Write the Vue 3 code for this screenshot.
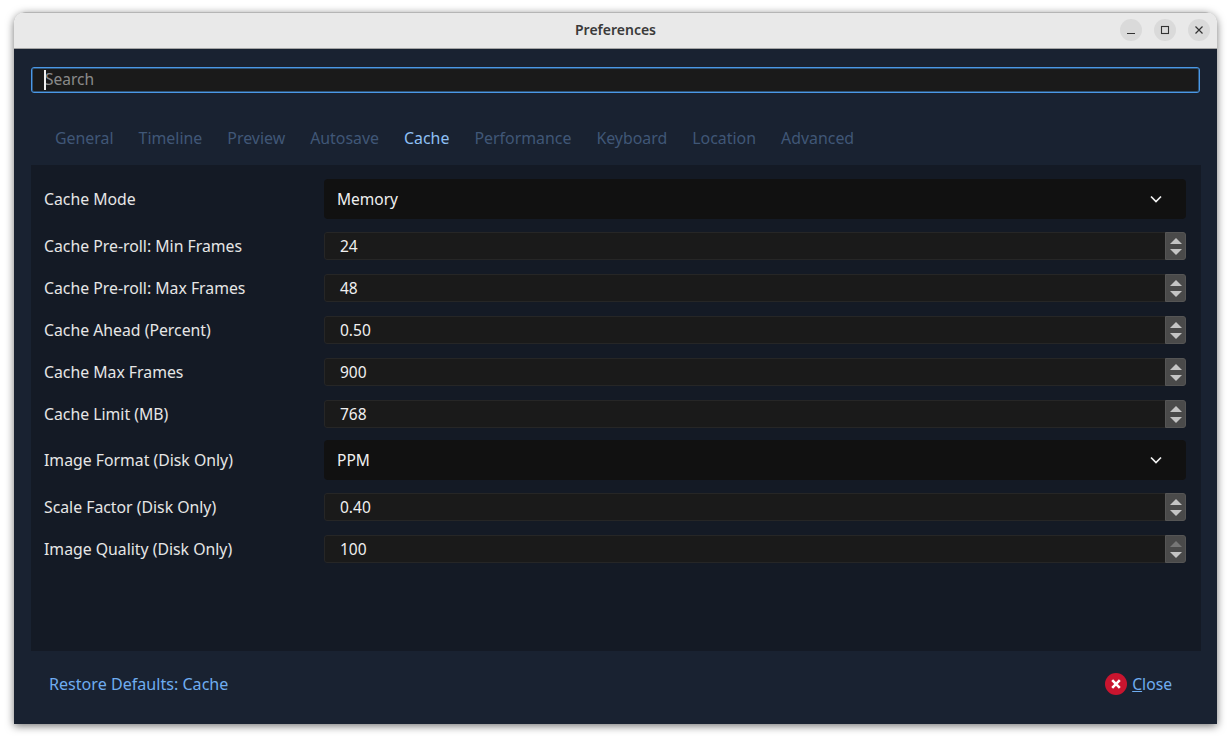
<template>
  <div class="desktop">
    <div class="window">
      <header class="titlebar">
        <span class="title">Preferences</span>
        <div class="window-buttons">
          <button class="win-btn">
            <svg width="10" height="10" viewBox="0 0 10 10"><path d="M1 8.5h8" stroke="#333" stroke-width="1.1" fill="none" /></svg>
          </button>
          <button class="win-btn">
            <svg width="10" height="10" viewBox="0 0 10 10"><rect x="1.5" y="1.5" width="7" height="7" stroke="#333" stroke-width="1.1" fill="none" /></svg>
          </button>
          <button class="win-btn">
            <svg width="10" height="10" viewBox="0 0 10 10"><path d="M1.5 1.5l7 7M8.5 1.5l-7 7" stroke="#333" stroke-width="1.2" fill="none" /></svg>
          </button>
        </div>
      </header>

      <main class="content">
        <div class="search-box">
          <span class="caret"></span>
          <span class="search-text">Search</span>
        </div>

        <nav class="tabs">
          <span
            v-for="tab in tabs"
            :key="tab"
            class="tab"
            :class="{ active: tab === 'Cache' }"
          >{{ tab }}</span>
        </nav>

        <section class="panel">
          <div
            v-for="row in rows"
            :key="row.label"
            class="row"
            :class="row.type === 'combo' ? 'row-combo' : 'row-spin'"
          >
            <label class="row-label">{{ row.label }}</label>

            <div v-if="row.type === 'combo'" class="combo">
              <span>{{ row.value }}</span>
              <svg width="14" height="10" viewBox="0 0 14 10"><path d="M2 2.5l5 5 5-5" stroke="#f2f2f2" stroke-width="1.7" fill="none" /></svg>
            </div>

            <div v-else class="spin">
              <span class="spin-value">{{ row.value }}</span>
              <div class="spin-buttons">
                <span class="arrow up" :class="{ disabled: row.value === '100' }"></span>
                <span class="arrow down"></span>
              </div>
            </div>
          </div>
        </section>

        <footer class="footer">
          <span class="restore">Restore Defaults: Cache</span>
          <span class="close">
            <svg width="22" height="22" viewBox="0 0 22 22">
              <circle cx="11" cy="11" r="11" fill="#c9152f" />
              <path d="M7.2 7.2l7.6 7.6M14.8 7.2l-7.6 7.6" stroke="#fff" stroke-width="2.6" fill="none" />
            </svg>
            <span class="close-text"><u>C</u>lose</span>
          </span>
        </footer>
      </main>
    </div>
  </div>
</template>

<script setup>
const tabs = ['General', 'Timeline', 'Preview', 'Autosave', 'Cache', 'Performance', 'Keyboard', 'Location', 'Advanced']

const rows = [
  { label: 'Cache Mode', type: 'combo', value: 'Memory' },
  { label: 'Cache Pre-roll: Min Frames', type: 'spin', value: '24' },
  { label: 'Cache Pre-roll: Max Frames', type: 'spin', value: '48' },
  { label: 'Cache Ahead (Percent)', type: 'spin', value: '0.50' },
  { label: 'Cache Max Frames', type: 'spin', value: '900' },
  { label: 'Cache Limit (MB)', type: 'spin', value: '768' },
  { label: 'Image Format (Disk Only)', type: 'combo', value: 'PPM' },
  { label: 'Scale Factor (Disk Only)', type: 'spin', value: '0.40' },
  { label: 'Image Quality (Disk Only)', type: 'spin', value: '100' }
]
</script>

<style>
html, body {
  margin: 0;
  background: #fff;
}
</style>

<style scoped>
.desktop {
  width: 1231px;
  height: 741px;
  padding: 12px 14px 17px;
  box-sizing: border-box;
  font-family: "Noto Sans", "Open Sans", sans-serif;
  overflow: hidden;
}

.window {
  height: 712px;
  display: flex;
  flex-direction: column;
  border-radius: 12px 12px 0 0;
  overflow: hidden;
  box-shadow: 0 2px 8px rgba(0, 0, 0, 0.55);
}

/* Barra de titulo */
.titlebar {
  height: 37px;
  flex: none;
  display: flex;
  align-items: center;
  justify-content: center;
  position: relative;
  padding-bottom: 2px;
  background: #e9e9e9;
  border-top: 1px solid #b5b5b5;
  border-bottom: 1px solid #a5a5a5;
  box-sizing: border-box;
}

.title {
  font-size: 14px;
  font-weight: 600;
  color: #3a3a3a;
}

.window-buttons {
  position: absolute;
  right: 7px;
  top: 6px;
  display: flex;
  gap: 12px;
}

.win-btn {
  width: 22px;
  height: 22px;
  padding: 0;
  border: none;
  border-radius: 50%;
  background: #dadada;
  display: flex;
  align-items: center;
  justify-content: center;
}

.content {
  flex: 1;
  display: flex;
  flex-direction: column;
  background: #192231;
  padding: 18px 16px 0 17px;
}

/* Busqueda */
.search-box {
  height: 26px;
  flex: none;
  box-sizing: border-box;
  display: flex;
  align-items: center;
  position: relative;
  margin-right: 1px;
  padding-left: 13px;
  padding-bottom: 3px;
  background: #1a1a1a;
  border: 1px solid #4a98e6;
  box-shadow: inset 0 0 0 1px rgba(74, 152, 230, 0.45);
  border-radius: 3px;
}

.caret {
  position: absolute;
  left: 12px;
  top: 2px;
  bottom: 2px;
  width: 2px;
  background: #f0f0f0;
}

.search-text {
  font-size: 15.5px;
  color: #8a8a8a;
}

/* Pestanas */
.tabs {
  display: flex;
  gap: 25px;
  height: 72px;
  flex: none;
  align-items: center;
  padding: 18px 0 0 24px;
  box-sizing: border-box;
}

.tab {
  font-size: 15.9px;
  color: #405777;
}

.tab.active {
  color: #8fc0f5;
}

/* Panel */
.panel {
  height: 486px;
  flex: none;
  box-sizing: border-box;
  padding: 9px 15px 0 13px;
  background: #141a25;
}

.row {
  display: flex;
  align-items: center;
}

.row-combo {
  height: 50px;
  margin-bottom: 1px;
}

.row-spin {
  height: 42px;
}

.row-label {
  width: 280px;
  flex: none;
  font-size: 15.8px;
  color: #e6e6e6;
}

.combo {
  flex: 1;
  height: 40px;
  display: flex;
  align-items: center;
  justify-content: space-between;
  padding: 0 23px 0 13px;
  background: #111111;
  border-radius: 4px;
  font-size: 15.5px;
  color: #f0f0f0;
}

.spin {
  flex: 1;
  height: 28px;
  display: flex;
  align-items: center;
  justify-content: space-between;
  background: #1a1a1a;
  border: 1px solid #262626;
  border-radius: 3px;
  box-sizing: border-box;
  font-size: 15.5px;
  color: #f0f0f0;
}

.spin-value {
  padding-left: 15px;
}

.spin-buttons {
  width: 21px;
  height: 28px;
  flex: none;
  margin-right: -1px;
  box-sizing: border-box;
  border: 1px solid #555;
  display: flex;
  flex-direction: column;
  align-items: center;
  justify-content: center;
  gap: 5px;
  background: #4a4a4a;
  border-radius: 0 3px 3px 0;
}

.arrow {
  width: 0;
  height: 0;
  border-left: 6px solid transparent;
  border-right: 6px solid transparent;
}

.arrow.up {
  border-bottom: 6px solid #c4c4c4;
}

.arrow.down {
  border-top: 6px solid #c4c4c4;
}

.arrow.up.disabled {
  border-bottom-color: #767676;
}

/* Pie */
.footer {
  flex: 1;
  display: flex;
  align-items: center;
  justify-content: space-between;
  padding: 0 29px 8px 18px;
}

.restore {
  font-size: 16.1px;
  color: #6fadf0;
}

.close {
  display: flex;
  align-items: center;
  gap: 5px;
}

.close-text {
  font-size: 15.7px;
  color: #6fadf0;
}
</style>
